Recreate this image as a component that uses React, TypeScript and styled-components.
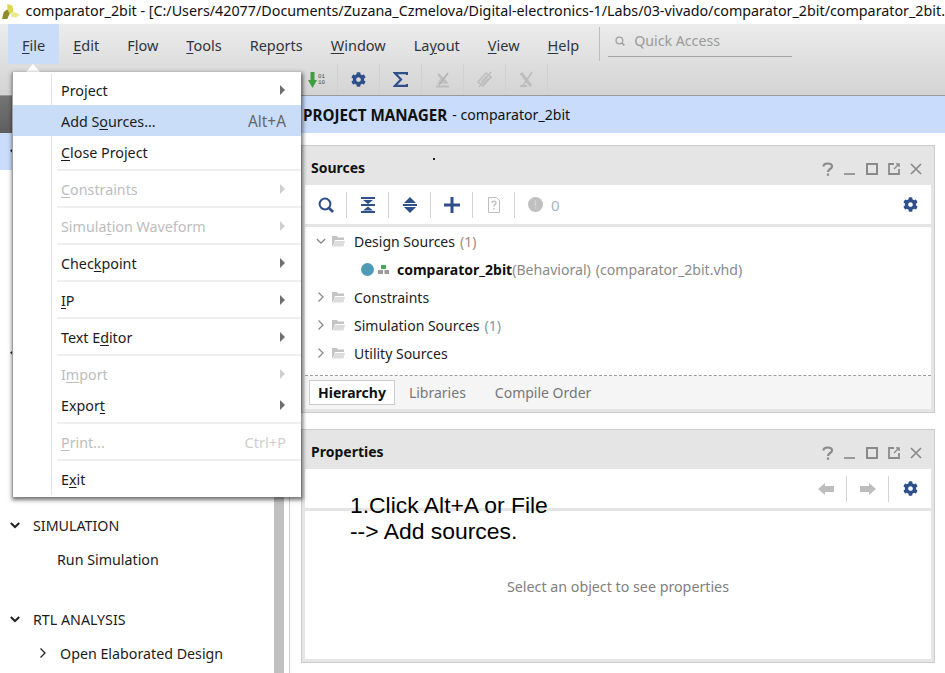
import React from 'react';
import styled, { createGlobalStyle } from 'styled-components';
import { FaCog } from 'react-icons/fa';

const FONT = `"Noto Sans", "Open Sans", sans-serif`;
const NAVY = '#2f4f8a';

const Global = createGlobalStyle`
  html, body { margin: 0; padding: 0; background: #fff; }
  body { font-family: ${FONT}; font-size: 14px; color: #1c1c1c; }
  * { box-sizing: border-box; }
`;

const Page = styled.div`
  position: relative; width: 945px; height: 673px; overflow: hidden;
  display: flex; flex-direction: column; background: #fff;
`;
const TitleBar = styled.div`
  height: 24px; flex: none; display: flex; align-items: center; gap: 5px; padding-left: 2px;
  white-space: nowrap; overflow: hidden; font-size: 14.3px; color: #111;
`;
const TitleText = styled.span`position: relative; top: -2px;`;
const TopChrome = styled.div`
  flex: none; height: 72px; background: linear-gradient(#ececec, #d3d3d3); border-bottom: 1px solid #9a9a9a;
`;
const MenuRow = styled.div`height: 40px; display: flex; align-items: stretch; padding-left: 8px;`;
const MenuTitle = styled.div<{ $open?: boolean }>`
  padding: 2px 14px 0; display: flex; align-items: center; font-size: 14.5px; color: #30353c;
  background: ${p => (p.$open ? '#c9dcf8' : 'transparent')};
`;
const MenuDivider = styled.div`width: 1px; height: 34px; margin: 3px 0 0 6px; background: #bdbdbd;`;
const QuickAccess = styled.div`
  width: 184px; height: 33px; margin-left: 8px; padding: 1px 0 0 7px; display: flex; align-items: center; gap: 9px;
  border-bottom: 1px solid #a5a5a5; color: #9a9a9a; font-size: 14.2px;
`;
const ToolRow = styled.div`height: 31px; display: flex; padding-left: 296px;`;
const ToolButton = styled.div`
  width: 42px; height: 31px; display: flex; align-items: center; justify-content: center;
  border-right: 1px solid #d0d0d0; color: ${NAVY}; font-size: 15px;
`;
const Mnemonic = styled.span`text-decoration: underline; text-underline-offset: 2px;`;

const Workspace = styled.div`flex: 1; min-height: 0; display: flex;`;
const Sidebar = styled.aside`width: 274px; flex: none; display: flex; flex-direction: column;`;
const NavHeader = styled.div`height: 37px; flex: none; background: linear-gradient(#747474, #5e5e5e);`;
const NavRow = styled.div<{ $active?: boolean; $top?: number; $indent?: number }>`
  height: ${p => (p.$active ? 37 : 34)}px; flex: none; display: flex; align-items: center;
  margin-top: ${p => p.$top ?? 0}px; padding-left: ${p => p.$indent ?? 0}px;
  background: ${p => (p.$active ? '#c9dcfb' : 'transparent')}; font-size: 14.25px; color: #1c1c1c;
`;
const NavChevronSlot = styled.span`width: 33px; flex: none; display: flex; justify-content: center; padding-right: 3px;`;
const NavSubChevronSlot = styled.span`width: 22px; flex: none; display: flex;`;
const ScrollTrack = styled.div`width: 10px; flex: none; background: #c0c0c0;`;
const SplitGap = styled.div`flex: none; border-right: 1px solid #cfcfcf; width: 6px;`;
const Main = styled.main`flex: 1; min-width: 0; display: flex; flex-direction: column;`;
const Banner = styled.div`
  height: 37px; flex: none; padding-left: 13px; display: flex; align-items: center; gap: 5px;
  background: #c9dcfb; font-size: 14.1px; color: #111;
`;
const BannerStrong = styled.strong`font-weight: 700; font-size: 15.2px;`;
const Panel = styled.section<{ $top: number; $h: number }>`
  margin: ${p => p.$top}px 10px 0 11px; height: ${p => p.$h}px; flex: none;
  display: flex; flex-direction: column; background: #e5e5e5;
  border: 1px solid #cccccc; padding: 0 3px 3px;
`;
const PanelHeader = styled.header`
  height: 39px; flex: none; display: flex; align-items: center; justify-content: space-between; padding: 3px 4px 0 6px;
`;
const PanelTitle = styled.h2`margin: 0; font-size: 14px; font-weight: 700; color: #111;`;
const WindowControls = styled.div`display: flex; padding-top: 3px;`;
const ControlSlot = styled.span`width: 22px; height: 16px; display: flex; align-items: center; justify-content: center;`;
const PanelToolbar = styled.div`
  height: 39px; flex: none; display: flex; align-items: center; background: #fff; margin-bottom: 3px;
`;
const PanelToolButton = styled.div`
  width: 42px; height: 26px; flex: none; display: flex; align-items: center; justify-content: center;
  border-right: 1px solid #d4d4d4; color: ${NAVY}; font-size: 15px;
`;
const LastToolButton = styled(PanelToolButton)`border-right: none;`;
const CountButton = styled.div`
  display: flex; align-items: center; gap: 8px; padding-left: 13px; color: #a9b4c0; font-size: 15px;
`;
const ToolSpacer = styled.div`flex: 1;`;
const Tree = styled.div`flex: 1; background: #fff; border-bottom: 1px dashed #9c9c9c;`;
const TreeRow = styled.div<{ $indent?: number }>`
  height: 28px; display: flex; align-items: center; padding-left: ${p => p.$indent ?? 8}px; font-size: 14px; color: #222;
`;
const ChevronSlot = styled.span`width: 16px; flex: none; display: flex; justify-content: center;`;
const FolderSlot = styled.span`width: 25px; flex: none; display: flex; padding-left: 3px;`;
const Count = styled.span<{ $tone: string }>`color: ${p => p.$tone}; margin-left: 5px;`;
const StatusDot = styled.span`width: 13px; height: 13px; border-radius: 50%; background: #4f9ab5; flex: none;`;
const HierarchySlot = styled.span`width: 23px; display: flex; padding-left: 4px; flex: none;`;
const TopName = styled.strong`font-weight: 700; color: #111;`;
const Muted = styled.span`color: #8a8a8a; font-size: 14.1px;`;
const MutedGap = styled(Muted)`margin-left: 5px;`;
const TabBar = styled.div`
  height: 33px; flex: none; background: #f5f5f5; display: flex; align-items: center; padding-left: 4px;
`;
const Tab = styled.div<{ $active?: boolean }>`
  height: 25px; display: flex; align-items: center; font-size: 14px;
  padding: 0 8px; margin-right: ${p => (p.$active ? 5 : 11)}px;
  border: 1px solid ${p => (p.$active ? '#cccccc' : 'transparent')};
  background: ${p => (p.$active ? '#fff' : 'transparent')};
  color: ${p => (p.$active ? '#111' : '#777')}; font-weight: ${p => (p.$active ? 700 : 400)};
`;
const EmptyBody = styled.div`
  flex: 1; background: #fff; display: flex; align-items: center; justify-content: center;
  padding-top: 2px; font-size: 14.25px; color: #808080;
`;

const DropMenu = styled.div`
  position: absolute; left: 12px; top: 72px; width: 289px; height: 425px; padding-top: 2px;
  background: #fff; border-left: 1px solid #a0a0a0; box-shadow: 1px 2px 4px 1px rgba(0,0,0,.55);
  &::before { content: ''; position: absolute; left: 38px; top: 2px; bottom: 2px; width: 1px; background: #e4e4e4; }
`;
const MenuCaret = styled.div`
  position: absolute; left: 26px; top: 64px; width: 0; height: 0;
  border-left: 7px solid transparent; border-right: 7px solid transparent; border-bottom: 8px solid #fff;
`;
const DropItem = styled.div<{ $hi?: boolean; $off?: boolean }>`
  position: relative; height: 31px; display: flex; align-items: center; justify-content: space-between;
  padding: 1px 15px 0 48px; font-size: 14.3px;
  background: ${p => (p.$hi ? '#c9dcf8' : 'transparent')};
  color: ${p => (p.$off ? '#bdbdbd' : '#1c1c1c')};
`;
const Shortcut = styled.span<{ $off?: boolean }>`
  color: ${p => (p.$off ? '#cfcfcf' : '#666')}; font-size: ${p => (p.$off ? 14.6 : 15.4)}px;
`;
const SubArrow = styled.span<{ $off?: boolean }>`
  width: 0; height: 0; margin-right: 1px; border-top: 5px solid transparent; border-bottom: 5px solid transparent;
  border-left: 5px solid ${p => (p.$off ? '#cfcfcf' : '#6e6e6e')};
`;
const DropSeparator = styled.div`
  position: relative; height: 6px; margin-left: 44px; display: flex; align-items: center;
  &::after { content: ''; display: block; width: 100%; height: 2px; background: #efefef; }
`;
const Annotation = styled.div`
  position: absolute; left: 350px; top: 492px; font-family: "Liberation Sans", Arial, sans-serif;
  font-size: 22.9px; line-height: 26px; color: #000; white-space: nowrap;
`;
const Speck = styled.div`position: absolute; left: 433px; top: 158px; width: 2px; height: 2px; background: #222;`;

const Chevron = ({ open, color = '#222', w = 2, size = 10 }: { open?: boolean; color?: string; w?: number; size?: number }) => (
  <svg width={size} height={size} viewBox="0 0 10 10" fill="none" stroke={color} strokeWidth={w}>
    <polyline points={open ? '0.8,3 5,7 9.2,3' : '2.5,0.5 7,5 2.5,9.5'} />
  </svg>
);
const Logo = () => (
  <svg width="21" height="18" viewBox="0 0 21 18">
    <polygon points="0,17 2,9 6,6 9,10 6,17" fill="#8f8c2c" />
    <polygon points="6,0 12,2 13,9 9,11 6,6" fill="#dcd94e" />
    <polygon points="10,11 14,9 21,12 16,15 11,15" fill="#ebe98f" />
  </svg>
);
const SearchIcon = ({ color, s = 16 }: { color: string; s?: number }) => (
  <svg width={s} height={s} viewBox="0 0 16 16" fill="none" stroke={color} strokeWidth="2">
    <circle cx="7" cy="7" r="5.4" />
    <line x1="11" y1="11" x2="15" y2="15" strokeWidth="2.6" />
  </svg>
);
const Collapse = () => (
  <svg width="14" height="16" viewBox="0 0 14 16" fill={NAVY}>
    <rect x="0" y="0" width="14" height="2" />
    <polygon points="2,3 12,3 7,7" />
    <rect x="0" y="7" width="14" height="2" />
    <polygon points="7,9.5 12,13.5 2,13.5" />
    <rect x="0" y="14" width="14" height="2" />
  </svg>
);
const Expand = () => (
  <svg width="14" height="16" viewBox="0 0 14 16" fill={NAVY}>
    <polygon points="7,0 13,6 1,6" />
    <rect x="0" y="7" width="14" height="2" />
    <polygon points="1,10 13,10 7,16" />
  </svg>
);
const Plus = () => (
  <svg width="16" height="16" viewBox="0 0 16 16" fill={NAVY}>
    <rect x="0" y="6.5" width="16" height="3" />
    <rect x="6.5" y="0" width="3" height="16" />
  </svg>
);
const DocHelp = () => (
  <svg width="14" height="16" viewBox="0 0 14 16" fill="none" stroke="#bdbdbd" strokeWidth="1">
    <path d="M1.5 .5h8l3 3v12h-11z" />
    <path d="M5 6c0-2.5 4-2.5 4 0 0 1.5-2 1.5-2 3.5M7 11v1.5" strokeWidth="1.3" />
  </svg>
);
const AlertDot = () => (
  <svg width="15" height="15" viewBox="0 0 15 15">
    <circle cx="7.5" cy="7.5" r="7.5" fill="#c0c0c0" />
    <rect x="6.8" y="3" width="1.4" height="6" fill="#d4d4d4" />
    <rect x="6.8" y="10" width="1.4" height="1.5" fill="#d4d4d4" />
  </svg>
);
const Folder = () => (
  <svg width="13" height="12" viewBox="0 0 13 12">
    <path d="M0 1h5l1 1.5h6V5H3L1 11H0z" fill="#c4c4c4" />
    <path d="M3 6h10l-1.5 5.5H1.2z" fill="#dcdcdc" />
  </svg>
);
const HierarchyIcon = () => (
  <svg width="11" height="9" viewBox="0 0 11 9">
    <rect x="3" y="0" width="5" height="4" fill="#4aa75a" />
    <rect x="0" y="5" width="5" height="4" fill="#9a9a9a" />
    <rect x="6.5" y="5" width="4.5" height="4" fill="#9a9a9a" />
  </svg>
);
const ArrowDownBits = () => (
  <svg width="17" height="16" viewBox="0 0 17 16">
    <rect x="2.5" y="0" width="4" height="9" fill="#3f9e3f" />
    <polygon points="0,8 9,8 4.5,16" fill="#3f9e3f" />
    <text x="10" y="6" fontSize="6" fontFamily="Liberation Mono, monospace" fill="#555">01</text>
    <text x="10" y="12" fontSize="6" fontFamily="Liberation Mono, monospace" fill="#555">10</text>
  </svg>
);
const Sigma = () => (
  <svg width="15" height="15" viewBox="0 0 15 15" fill="none" stroke={NAVY} strokeWidth="2.2">
    <path d="M14 3V1.2H2l6 6.3-6 6.3h12V12" />
  </svg>
);
const DisabledTool = ({ kind }: { kind: number }) => (
  <svg width="17" height="17" viewBox="0 0 17 17" fill="none" stroke="#bdbdbd">
    {kind === 0 && <>
      <path d="M2 15.5h13" strokeWidth="2" />
      <path d="M3 13l4-7 7 7z" fill="#c4c4c4" stroke="none" />
      <path d="M4 3l9 9" strokeWidth="2.4" />
      <path d="M14 2L5 14" strokeWidth="1.4" stroke="#b0b0b0" />
    </>}
    {kind === 1 && <>
      <path d="M2 11l8-9 5 4-8 9z" strokeWidth="1.6" />
      <path d="M5 11l6-6M7 13l6-6" strokeWidth="1.2" />
      <path d="M15 1L3 16" strokeWidth="1.3" />
    </>}
    {kind === 2 && <>
      <path d="M3 2l10 13" strokeWidth="3" />
      <path d="M14 1L4 16" strokeWidth="1.6" />
      <path d="M2 15h7" strokeWidth="2" />
    </>}
  </svg>
);
const Help = () => (
  <svg width="12" height="14" viewBox="0 0 12 14" fill="none" stroke="#8a8a8a" strokeWidth="2.2">
    <path d="M1.5 4.5C1.5 0.5 10 0.5 10 4.5 10 7 6 7 6 10" />
    <rect x="4.9" y="11.5" width="2.2" height="2.2" fill="#8a8a8a" stroke="none" />
  </svg>
);
const Minimize = () => <svg width="12" height="14" viewBox="0 0 12 14"><rect x="0" y="11" width="11" height="2" fill="#9a9a9a" /></svg>;
const Maximize = () => <svg width="12" height="12" viewBox="0 0 12 12" fill="none" stroke="#8a8a8a" strokeWidth="2"><rect x="1" y="1" width="10" height="10" /></svg>;
const Popout = () => (
  <svg width="12" height="12" viewBox="0 0 12 12" fill="none" stroke="#8a8a8a" strokeWidth="1.8">
    <path d="M6 1H1v10h10V6" /><path d="M6 6l5-5M8 .9h3.1V4" strokeWidth="1.3" />
  </svg>
);
const Close = () => <svg width="12" height="12" viewBox="0 0 12 12" fill="none" stroke="#8a8a8a" strokeWidth="1.7"><path d="M1 1l10 10M11 1L1 11" /></svg>;
const ArrowLeft = () => <svg width="16" height="12" viewBox="0 0 16 12" fill="#bdbdbd"><polygon points="0,6 7,0 7,3 16,3 16,9 7,9 7,12" /></svg>;
const ArrowRight = () => <svg width="16" height="12" viewBox="0 0 16 12" fill="#bdbdbd"><polygon points="16,6 9,0 9,3 0,3 0,9 9,9 9,12" /></svg>;

const Mn = ({ text, at }: { text: string; at: number }) => (
  <span>{text.slice(0, at)}<Mnemonic>{text[at]}</Mnemonic>{text.slice(at + 1)}</span>
);

const menus: [string, number][] = [['File', 0], ['Edit', 0], ['Flow', 1], ['Tools', 0], ['Reports', 3], ['Window', 0], ['Layout', 2], ['View', 0], ['Help', 0]];

type Entry = { t: string; at: number; off?: boolean; hi?: boolean; sub?: boolean; key?: string; sep?: boolean };
const entries: Entry[] = [
  { t: 'Project', at: 3, sub: true },
  { t: 'Add Sources...', at: 5, hi: true, key: 'Alt+A' },
  { t: 'Close Project', at: 0, sep: true },
  { t: 'Constraints', at: 0, off: true, sub: true, sep: true },
  { t: 'Simulation Waveform', at: 6, off: true, sub: true, sep: true },
  { t: 'Checkpoint', at: 4, sub: true, sep: true },
  { t: 'IP', at: 0, sub: true, sep: true },
  { t: 'Text Editor', at: 6, sub: true, sep: true },
  { t: 'Import', at: 1, off: true, sub: true },
  { t: 'Export', at: 5, sub: true, sep: true },
  { t: 'Print...', at: 0, off: true, key: 'Ctrl+P', sep: true },
  { t: 'Exit', at: 1 },
];

const PanelControls = () => (
  <WindowControls>
    <ControlSlot><Help /></ControlSlot>
    <ControlSlot><Minimize /></ControlSlot>
    <ControlSlot><Maximize /></ControlSlot>
    <ControlSlot><Popout /></ControlSlot>
    <ControlSlot><Close /></ControlSlot>
  </WindowControls>
);

export default function App() {
  return (
    <Page>
      <Global />
      <TitleBar>
        <Logo />
        <TitleText>comparator_2bit - [C:/Users/42077/Documents/Zuzana_Czmelova/Digital-electronics-1/Labs/03-vivado/comparator_2bit/comparator_2bit.</TitleText>
      </TitleBar>
      <TopChrome>
        <MenuRow>
          {menus.map(([m, at], i) => (
            <MenuTitle key={m} $open={i === 0}><Mn text={m} at={at} /></MenuTitle>
          ))}
          <MenuDivider />
          <QuickAccess><SearchIcon color="#a0a0a0" s={10} /><span>Quick Access</span></QuickAccess>
        </MenuRow>
        <ToolRow>
          <ToolButton><ArrowDownBits /></ToolButton>
          <ToolButton><FaCog /></ToolButton>
          <ToolButton><Sigma /></ToolButton>
          <ToolButton><DisabledTool kind={0} /></ToolButton>
          <ToolButton><DisabledTool kind={1} /></ToolButton>
          <ToolButton><DisabledTool kind={2} /></ToolButton>
        </ToolRow>
      </TopChrome>
      <Workspace>
        <Sidebar>
          <NavHeader />
          <NavRow $active><NavChevronSlot><Chevron open /></NavChevronSlot></NavRow>
          <NavRow $top={167}><NavChevronSlot><Chevron open /></NavChevronSlot></NavRow>
          <NavRow $top={137}><NavChevronSlot><Chevron open /></NavChevronSlot>SIMULATION</NavRow>
          <NavRow $indent={57}>Run Simulation</NavRow>
          <NavRow $top={26}><NavChevronSlot><Chevron open /></NavChevronSlot>RTL ANALYSIS</NavRow>
          <NavRow $indent={38}><NavSubChevronSlot><Chevron w={1.3} /></NavSubChevronSlot>Open Elaborated Design</NavRow>
        </Sidebar>
        <ScrollTrack />
        <SplitGap />
        <Main>
          <Banner><BannerStrong>PROJECT MANAGER</BannerStrong><span>- comparator_2bit</span></Banner>
          <Panel $top={12} $h={268}>
            <PanelHeader><PanelTitle>Sources</PanelTitle><PanelControls /></PanelHeader>
            <PanelToolbar>
              <PanelToolButton><SearchIcon color={NAVY} /></PanelToolButton>
              <PanelToolButton><Collapse /></PanelToolButton>
              <PanelToolButton><Expand /></PanelToolButton>
              <PanelToolButton><Plus /></PanelToolButton>
              <PanelToolButton><DocHelp /></PanelToolButton>
              <CountButton><AlertDot /><span>0</span></CountButton>
              <ToolSpacer />
              <LastToolButton><FaCog /></LastToolButton>
            </PanelToolbar>
            <Tree>
              <TreeRow><ChevronSlot><Chevron open color="#8a8a8a" w={1.3} /></ChevronSlot><FolderSlot><Folder /></FolderSlot>Design Sources<Count $tone="#a08a80">(1)</Count></TreeRow>
              <TreeRow $indent={56}><StatusDot /><HierarchySlot><HierarchyIcon /></HierarchySlot><TopName>comparator_2bit</TopName><Muted>(Behavioral)</Muted><MutedGap>(comparator_2bit.vhd)</MutedGap></TreeRow>
              <TreeRow><ChevronSlot><Chevron color="#8a8a8a" w={1.3} /></ChevronSlot><FolderSlot><Folder /></FolderSlot>Constraints</TreeRow>
              <TreeRow><ChevronSlot><Chevron color="#8a8a8a" w={1.3} /></ChevronSlot><FolderSlot><Folder /></FolderSlot>Simulation Sources<Count $tone="#7d9aa8">(1)</Count></TreeRow>
              <TreeRow><ChevronSlot><Chevron color="#8a8a8a" w={1.3} /></ChevronSlot><FolderSlot><Folder /></FolderSlot>Utility Sources</TreeRow>
            </Tree>
            <TabBar>
              <Tab $active>Hierarchy</Tab>
              <Tab>Libraries</Tab>
              <Tab>Compile Order</Tab>
            </TabBar>
          </Panel>
          <Panel $top={16} $h={234}>
            <PanelHeader><PanelTitle>Properties</PanelTitle><PanelControls /></PanelHeader>
            <PanelToolbar>
              <ToolSpacer />
              <PanelToolButton><ArrowLeft /></PanelToolButton>
              <PanelToolButton><ArrowRight /></PanelToolButton>
              <LastToolButton><FaCog /></LastToolButton>
            </PanelToolbar>
            <EmptyBody>Select an object to see properties</EmptyBody>
          </Panel>
        </Main>
      </Workspace>
      <MenuCaret />
      <DropMenu>
        {entries.map(e => (
          <React.Fragment key={e.t}>
            <DropItem $hi={e.hi} $off={e.off}>
              <Mn text={e.t} at={e.at} />
              {e.key && <Shortcut $off={e.off}>{e.key}</Shortcut>}
              {e.sub && <SubArrow $off={e.off} />}
            </DropItem>
            {e.sep && <DropSeparator />}
          </React.Fragment>
        ))}
      </DropMenu>
      <Annotation>1.Click Alt+A or File<br />--&gt; Add sources.</Annotation>
      <Speck />
    </Page>
  );
}
